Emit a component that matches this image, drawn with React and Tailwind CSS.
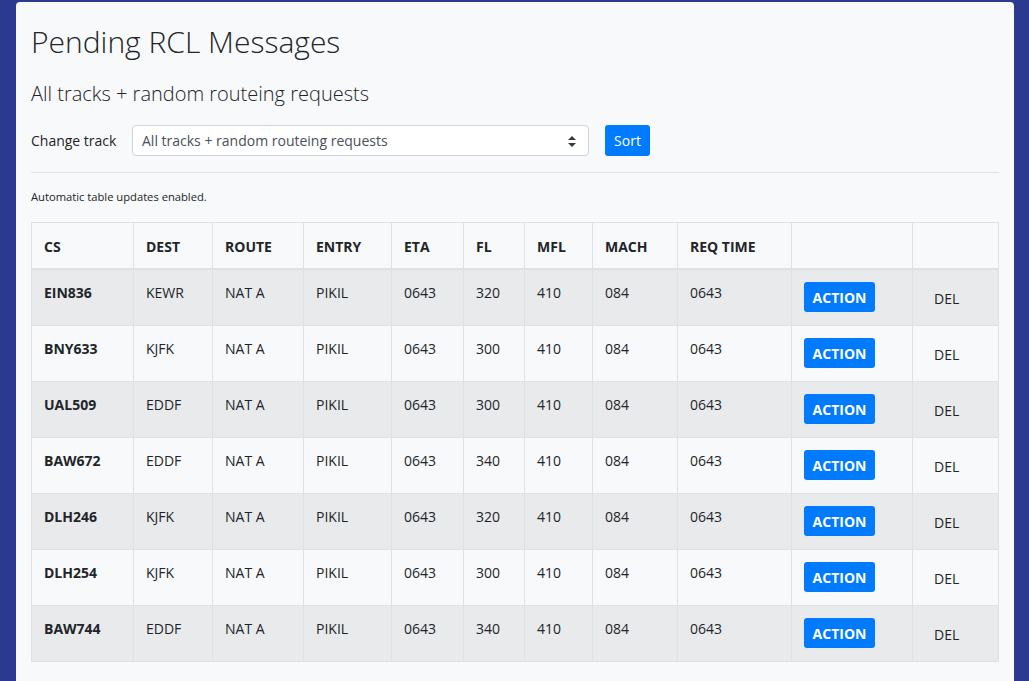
import React from "react";

const rows = [
  ["EIN836", "KEWR", "320"],
  ["BNY633", "KJFK", "300"],
  ["UAL509", "EDDF", "300"],
  ["BAW672", "EDDF", "340"],
  ["DLH246", "KJFK", "320"],
  ["DLH254", "KJFK", "300"],
  ["BAW744", "EDDF", "340"],
];

const font = { fontFamily: '"Open Sans", "Noto Sans", sans-serif' };

const td = "border border-[#dee2e6] px-3 pt-3 pb-[13px] align-top";

export default function App() {
  return (
    <div className="min-h-[681px] bg-[#2b3990] pl-4 pr-[15px] pt-[2px]" style={font}>
      <div className="bg-[#f8f9fa] rounded-t-[4px] px-[15px] pt-[22px] pb-10 text-[#212529] min-h-[679px]">
        <h1 className="text-[30px] leading-[36px] font-light">Pending RCL Messages</h1>
        <h2 className="mt-[22px] text-[20px] leading-[24px] font-light">All tracks + random routeing requests</h2>
        <div className="mt-[19px] flex items-center h-[31px]">
          <label className="text-[14px] w-[101px]">Change track</label>
          <div className="relative w-[457px] h-[31px] bg-white border border-[#ced4da] rounded-[4px] flex items-center pl-[9px] text-[14px] text-[#495057]">
            All tracks + random routeing requests
            <svg className="absolute right-[12px] top-[10px]" width="8" height="11" viewBox="0 0 8 11">
              <path d="M4 0 L8 4 H0 Z" fill="#343a40" />
              <path d="M4 11 L8 7 H0 Z" fill="#343a40" />
            </svg>
          </div>
          <button className="ml-4 h-[31px] w-[45px] bg-[#007bff] text-white text-[14px] rounded-[3px]">Sort</button>
        </div>
        <hr className="mt-4 border-0 border-t border-[#dee2e6]" />
        <p className="mt-4 text-[11.2px] leading-[16px]">Automatic table updates enabled.</p>
        <table className="mt-[17px] table-fixed border-collapse w-[967px] text-[14px] leading-[21px]">
          <thead>
            <tr className="text-left font-bold">
              {[
                ["CS", "w-[102px]"],
                ["DEST", "w-[79px]"],
                ["ROUTE", "w-[91px]"],
                ["ENTRY", "w-[88px]"],
                ["ETA", "w-[72px]"],
                ["FL", "w-[61px]"],
                ["MFL", "w-[68px]"],
                ["MACH", "w-[85px]"],
                ["REQ TIME", "w-[114px]"],
                ["", "w-[121px]"],
                ["", "w-[86px]"],
              ].map(([h, w], i) => (
                <th
                  key={i}
                  className={`${w} border border-[#dee2e6] border-b-2 px-3 pt-[13px] pb-[11px] font-bold align-top`}
                >
                  {h}
                </th>
              ))}
            </tr>
          </thead>
          <tbody>
            {rows.map(([cs, dest, fl], i) => (
              <tr key={cs} className={i % 2 === 0 ? "bg-[#e9eaec]" : "bg-[#f8f9fa]"}>
                <td className={`${td} font-bold`}>{cs}</td>
                <td className={td}>{dest}</td>
                <td className={td}>NAT A</td>
                <td className={td}>PIKIL</td>
                <td className={td}>0643</td>
                <td className={td}>{fl}</td>
                <td className={td}>410</td>
                <td className={td}>084</td>
                <td className={td}>0643</td>
                <td className={td}>
                  <button className="block h-[30px] w-[71px] bg-[#007bff] text-white font-bold text-[14px] rounded-[3px]">
                    ACTION
                  </button>
                </td>
                <td className={td}>
                  <span className="block h-[30px] pl-[9px] pt-[6px] leading-[21px]">DEL</span>
                </td>
              </tr>
            ))}
          </tbody>
        </table>
      </div>
    </div>
  );
}
